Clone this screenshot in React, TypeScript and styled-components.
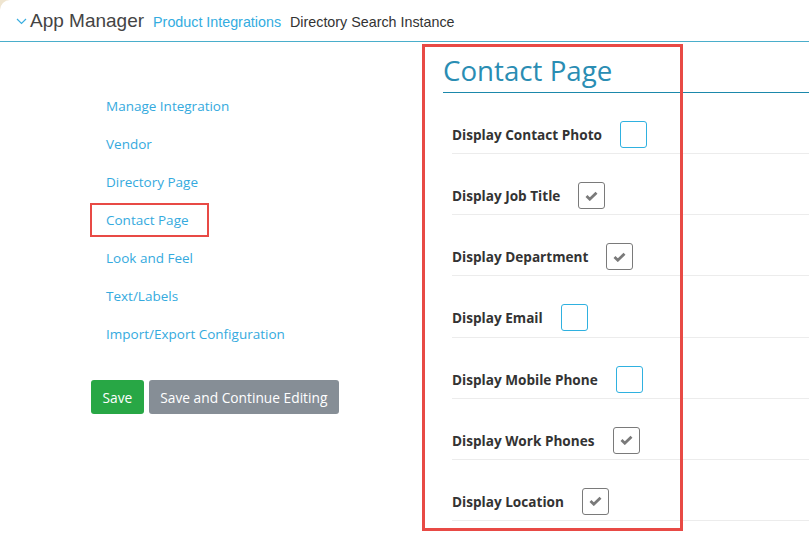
import React from 'react';
import styled, { createGlobalStyle } from 'styled-components';

const GlobalStyle = createGlobalStyle`
  html, body {
    margin: 0;
    padding: 0;
    background: #efe5d0;
  }
  body {
    font-family: 'Open Sans', 'Liberation Sans', sans-serif;
  }
`;

const Page = styled.div`
  background: #ffffff;
  border-top-left-radius: 10px;
  width: 809px;
  height: 537px;
  overflow: hidden;
`;

const Header = styled.header`
  height: 41px;
  display: flex;
  align-items: baseline;
  padding-left: 16px;
  border-bottom: 1px solid #4aaecb;
  font-family: 'Liberation Sans', Arial, sans-serif;
`;

const Chevron = styled.svg`
  width: 11px;
  height: 7px;
  margin-right: 3px;
  align-self: center;
  margin-top: 2px;
`;

const AppTitle = styled.span`
  font-size: 19px;
  color: #444;
  line-height: 41px;
  margin-right: 9px;
`;

const Crumb = styled.span<{ $link?: boolean }>`
  font-size: 14.3px;
  color: ${(p) => (p.$link ? '#33ace0' : '#333')};
  margin-right: 9px;
`;

const Main = styled.div`
  display: flex;
`;

const Sidebar = styled.div`
  width: 352px;
  padding-left: 91px;
  padding-top: 45px;
  flex-shrink: 0;
`;

const NavList = styled.ul`
  list-style: none;
  margin: 0;
  padding: 0 0 0 15px;
`;

const NavItem = styled.li`
  position: relative;
  height: 38px;
  line-height: 38px;
  font-size: 13.5px;
  color: #35aade;
`;

const Highlight = styled.div<{ $w: number; $h: number; $l: number; $t: number; $b: number }>`
  position: absolute;
  left: ${(p) => p.$l}px;
  top: ${(p) => p.$t}px;
  width: ${(p) => p.$w}px;
  height: ${(p) => p.$h}px;
  border: ${(p) => p.$b}px solid #e84a45;
  box-sizing: border-box;
  pointer-events: none;
`;

const Actions = styled.div`
  display: flex;
  gap: 5px;
  margin-top: 27px;
`;

const Button = styled.button<{ $variant: 'success' | 'secondary' }>`
  height: 34px;
  padding: 0 11.5px;
  border: none;
  border-radius: 3px;
  font-family: 'Open Sans', 'Liberation Sans', sans-serif;
  font-size: 13.75px;
  color: #fff;
  background: ${(p) => (p.$variant === 'success' ? '#28a745' : '#868e96')};
`;

const Content = styled.div`
  position: relative;
  flex: 1;
`;

const Title = styled.h1`
  margin: 0;
  padding-top: 8px;
  height: 42px;
  font-size: 27.7px;
  font-weight: 400;
  line-height: 40px;
  color: #2a8db3;
  border-bottom: 1px solid #1b88ab;
`;

const Rows = styled.div`
  margin-left: 9px;
`;

const Row = styled.div`
  display: flex;
  align-items: center;
  padding: 28px 0 5.17px;
  border-bottom: 1px solid #ececec;
`;

const Label = styled.span`
  font-size: 13.6px;
  font-weight: 700;
  color: #333;
  margin-right: 18px;
`;

const Box = styled.span<{ $checked: boolean }>`
  width: 27px;
  height: 27px;
  box-sizing: border-box;
  border-radius: 3px;
  border: ${(p) => (p.$checked ? '1px solid #7a7a7a' : '1.5px solid #2fb1e0')};
  display: flex;
  align-items: center;
  justify-content: center;
`;

const Check = () => (
  <svg width="13" height="10" viewBox="0 0 13 10">
    <path d="M1.5 5 L4.8 8.2 L11.5 1.8" fill="none" stroke="#7a7a7a" strokeWidth="2.8" />
  </svg>
);

const navItems = [
  'Manage Integration',
  'Vendor',
  'Directory Page',
  'Contact Page',
  'Look and Feel',
  'Text/Labels',
  'Import/Export Configuration',
];

const options = [
  { label: 'Display Contact Photo', checked: false },
  { label: 'Display Job Title', checked: true },
  { label: 'Display Department', checked: true },
  { label: 'Display Email', checked: false },
  { label: 'Display Mobile Phone', checked: false },
  { label: 'Display Work Phones', checked: true },
  { label: 'Display Location', checked: true },
];

const App: React.FC = () => {
  return (
    <Page>
      <GlobalStyle />
      <Header>
        <Chevron viewBox="0 0 11 7">
          <polyline points="1,1 5.5,5.5 10,1" fill="none" stroke="#3aaee0" strokeWidth="1.2" />
        </Chevron>
        <AppTitle>App Manager</AppTitle>
        <Crumb $link>Product Integrations</Crumb>
        <Crumb>Directory Search Instance</Crumb>
      </Header>
      <Main>
        <Sidebar>
          <NavList>
            {navItems.map((item) => (
              <NavItem key={item}>
                {item}
                {item === 'Contact Page' && <Highlight $l={-16} $t={2} $w={119} $h={34} $b={2} />}
              </NavItem>
            ))}
          </NavList>
          <Actions>
            <Button $variant="success">Save</Button>
            <Button $variant="secondary">Save and Continue Editing</Button>
          </Actions>
        </Sidebar>
        <Content>
          <Title>Contact Page</Title>
          <Rows>
            {options.map((o) => (
              <Row key={o.label}>
                <Label>{o.label}</Label>
                <Box $checked={o.checked}>{o.checked && <Check />}</Box>
              </Row>
            ))}
          </Rows>
          <Highlight $l={-21} $t={2} $w={261} $h={487} $b={3} />
        </Content>
      </Main>
    </Page>
  );
};

export default App;
